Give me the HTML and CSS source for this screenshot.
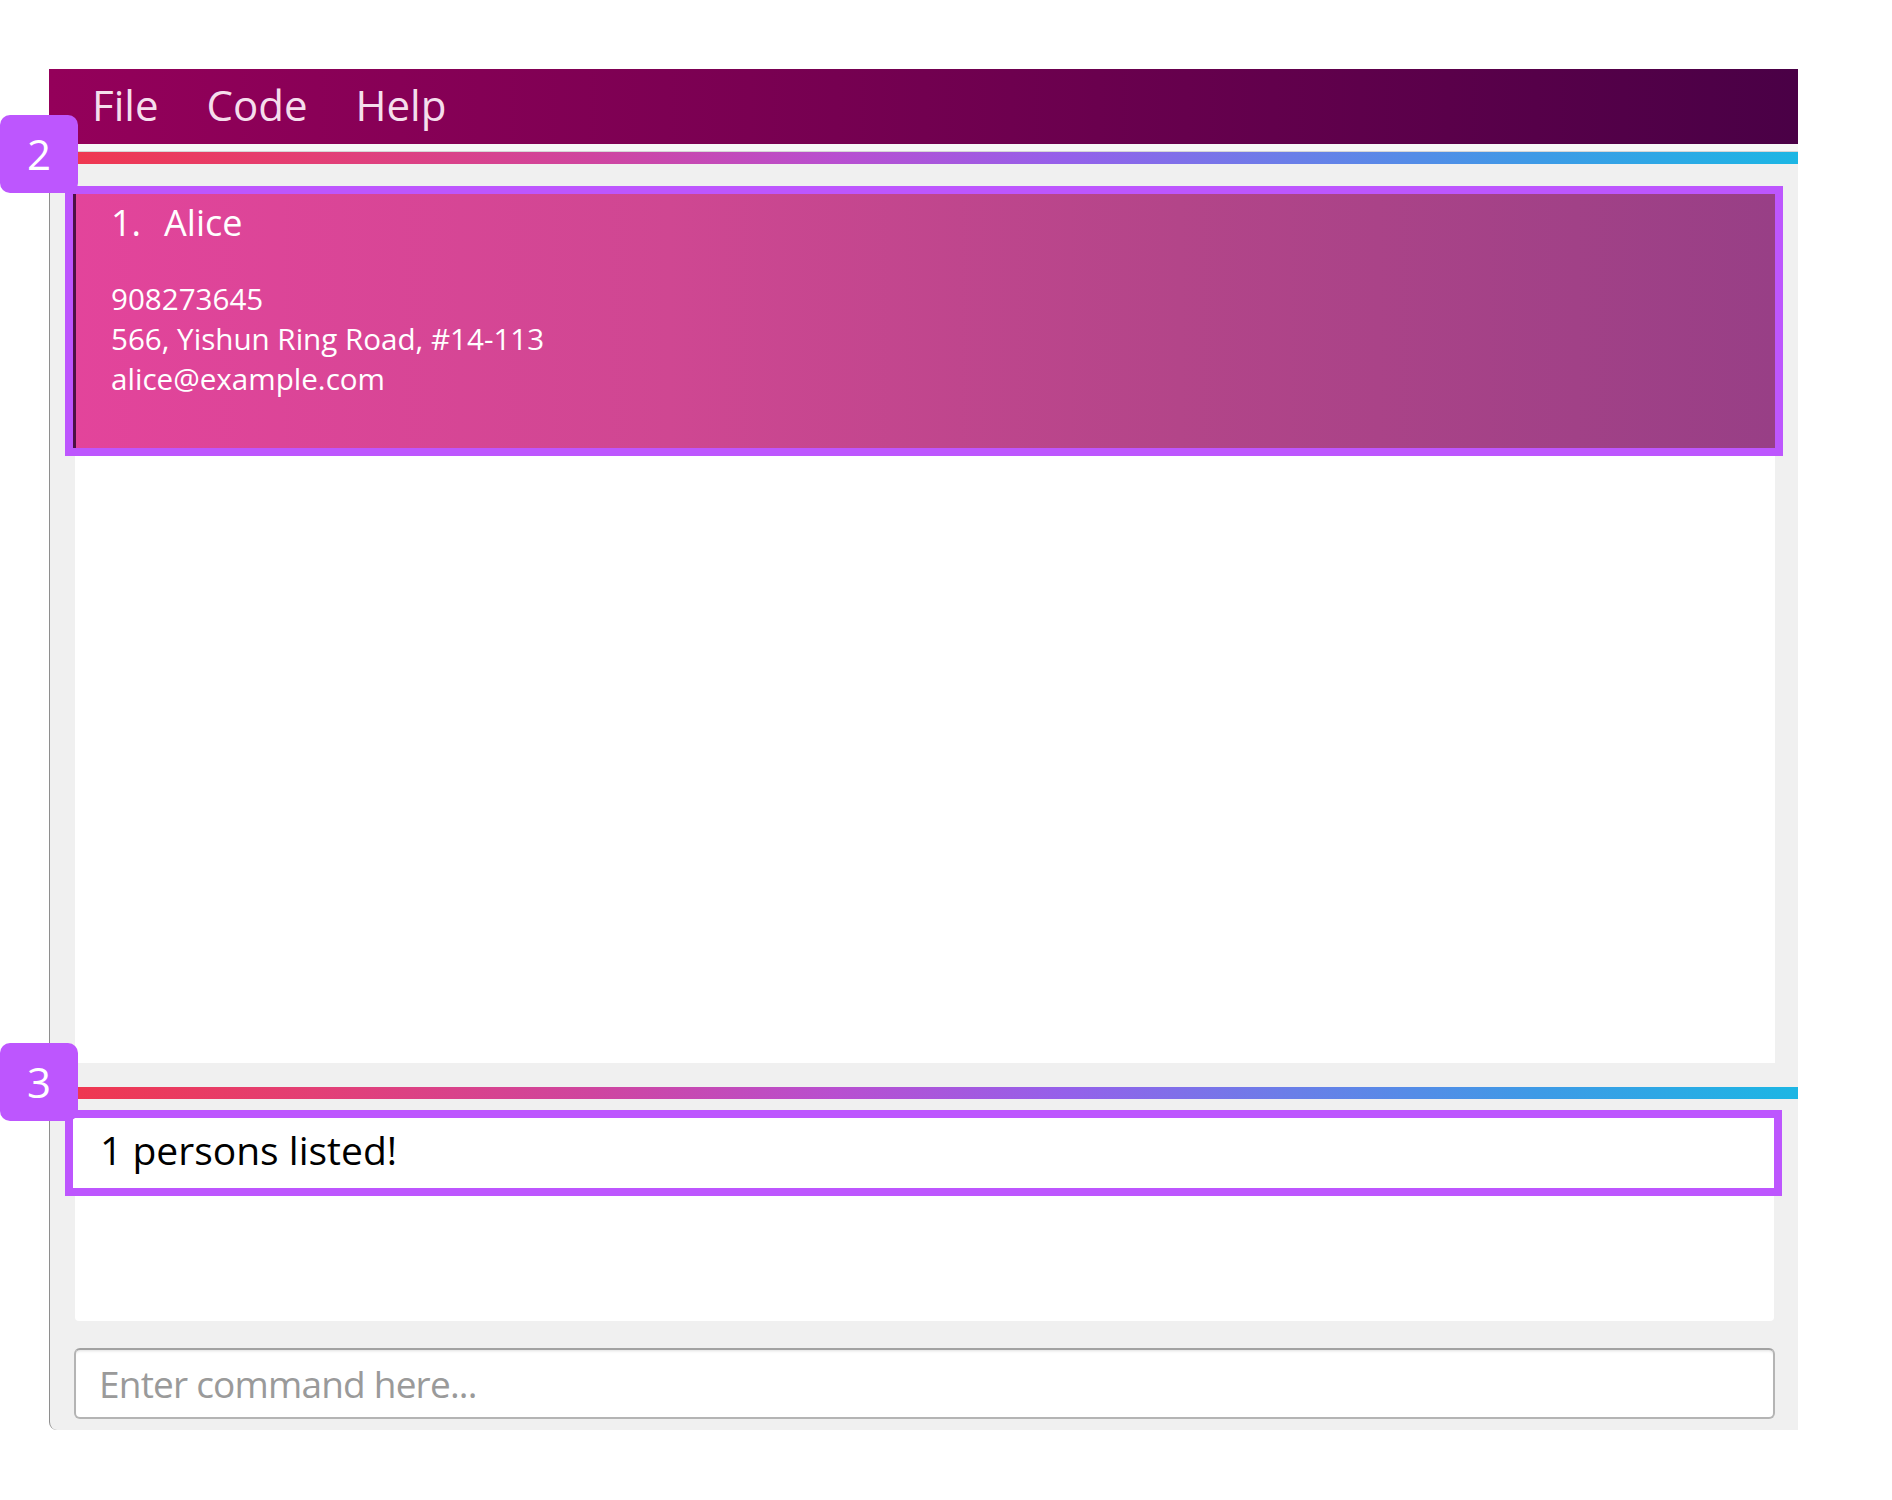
FILE: index.html
```html
<!DOCTYPE html>
<html lang="en">
<head>
<meta charset="utf-8">
<title>Address App</title>
<link rel="stylesheet" href="styles.css">
</head>
<body>
<div class="window">
  <div class="menubar">
    <span class="menu-item">File</span>
    <span class="menu-item">Code</span>
    <span class="menu-item">Help</span>
  </div>
  <div class="main">
    <div class="sep"></div>
    <div class="bar"></div>
    <div class="list-panel">
      <div class="card annotated">
        <div class="card-title"><span class="card-id">1.</span><span class="card-name">Alice</span></div>
        <div class="card-details">
          <div class="card-line">908273645</div>
          <div class="card-line">566, Yishun Ring Road, #14-113</div>
          <div class="card-line">alice@example.com</div>
        </div>
      </div>
    </div>
    <div class="bar bar-lower"></div>
    <div class="result-panel">
      <div class="status annotated">1 persons listed!</div>
    </div>
    <div class="command-box">
      <input class="command-input" type="text" placeholder="Enter command here...">
    </div>
  </div>
</div>
<div class="badge badge-two">2</div>
<div class="badge badge-three">3</div>
</body>
</html>
```

FILE: styles.css
```css
html, body {
  margin: 0;
  padding: 0;
  background: #ffffff;
}

body {
  position: relative;
  width: 1892px;
  height: 1500px;
  font-family: "Open Sans", "Noto Sans", sans-serif;
}

.window {
  margin: 69px 0 0 49px;
  width: 1749px;
}

.menubar {
  display: flex;
  height: 75px;
  padding-left: 19px;
  background: linear-gradient(90deg, #94005a 0%, #7a0052 40%, #5e004b 75%, #4a0046 100%);
}

.menu-item {
  padding: 0 24px;
  font-size: 42px;
  line-height: 71px;
  color: #f5deec;
}

.main {
  display: flex;
  flex-direction: column;
  background: #f0f0f0;
  border-left: 1px solid #8e8e8e;
  border-bottom-left-radius: 8px;
  padding-bottom: 11px;
}

.sep {
  height: 7px;
  background: #f7f7f7;
  border-bottom: 1px solid #d6d6d6;
}

.bar {
  height: 12px;
  background: linear-gradient(90deg, #f0364c 0%, #e33f75 15%, #cf459f 31%, #b84fd0 45%, #9560ea 58%, #6a7ee8 71%, #3e9ae6 85%, #1cb6e4 100%);
}

.list-panel {
  margin: 30px 23px 0 25px;
  height: 869px;
  background: #ffffff;
}

.annotated {
  outline: 8px solid #bd56fe;
  outline-offset: 0;
}

.card {
  box-sizing: border-box;
  height: 254px;
  margin-left: -2px;
  padding: 7px 0 0 38px;
  color: #ffffff;
  background: linear-gradient(90deg, #e3449b 0%, #cf4792 35%, #b34589 65%, #983f86 100%);
  box-shadow: inset 3px 0 0 #4d1044;
}

.card-title {
  font-size: 36px;
  line-height: 44px;
}

.card-id {
  margin-right: 23px;
}

.card-details {
  margin-top: 34px;
  font-size: 29.6px;
  line-height: 40px;
}

.bar-lower {
  margin-top: 24px;
}

.result-panel {
  margin: 19px 24px 0 25px;
  height: 203px;
  background: #ffffff;
  border-radius: 4px;
}

.status {
  box-sizing: border-box;
  height: 70px;
  margin-left: -2px;
  padding-left: 27px;
  font-size: 39px;
  line-height: 64px;
  color: #000000;
  background: #ffffff;
}

.command-box {
  margin: 27px 23px 0 24px;
  height: 71px;
}

.command-input {
  box-sizing: border-box;
  display: block;
  width: 100%;
  height: 71px;
  margin: 0;
  padding: 0 20px 0 23px;
  font-family: "Open Sans", "Noto Sans", sans-serif;
  font-size: 37px;
  letter-spacing: -0.8px;
  color: #000000;
  background: #ffffff;
  border: 2px solid #b4b4b4;
  border-top-color: #a2a2a2;
  border-radius: 6px;
  box-shadow: inset 0 3px 3px -2px rgba(0, 0, 0, 0.12);
  outline: none;
}

.command-input::placeholder {
  color: #9a9a9a;
}

.badge {
  position: absolute;
  left: 0;
  width: 78px;
  height: 78px;
  border-radius: 10px;
  background: #bd56fe;
  color: #ffffff;
  font-size: 42px;
  line-height: 78px;
  text-align: center;
}

.badge-two {
  top: 115px;
}

.badge-three {
  top: 1043px;
}
```
